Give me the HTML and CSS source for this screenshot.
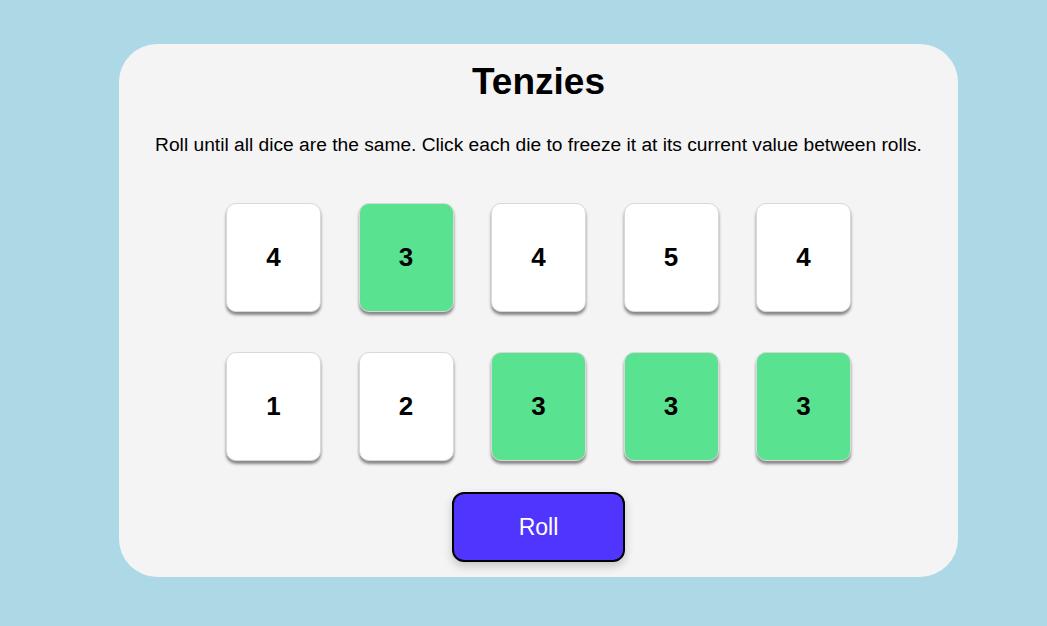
FILE: index.html
```html
<!DOCTYPE html>
<html>
<head>
<meta charset="utf-8">
<link rel="stylesheet" href="styles.css">
</head>
<body>
<main class="card">
  <h1 class="title">Tenzies</h1>
  <p class="instructions">Roll until all dice are the same. Click each die to freeze it at its current value between rolls.</p>
  <div class="dice">
    <button class="die">4</button>
    <button class="die held">3</button>
    <button class="die">4</button>
    <button class="die">5</button>
    <button class="die">4</button>
    <button class="die">1</button>
    <button class="die">2</button>
    <button class="die held">3</button>
    <button class="die held">3</button>
    <button class="die held">3</button>
  </div>
  <button class="roll">Roll</button>
</main>
</body>
</html>
```
FILE: styles.css
```css
html, body {
  margin: 0;
  padding: 0;
}
body {
  background: #ADD8E6;
  font-family: "Liberation Sans", Arial, sans-serif;
  height: 626px;
  overflow: hidden;
}
.card {
  box-sizing: border-box;
  width: 839px;
  height: 533px;
  margin: 44px 0 0 119px;
  background: #F4F4F4;
  border-radius: 38px;
  padding: 19px 0 0;
  display: flex;
  flex-direction: column;
  align-items: center;
}
.title {
  margin: 0;
  font-size: 37px;
  line-height: 37px;
  font-weight: bold;
  color: #000;
}
.instructions {
  margin: 35px 0 0;
  font-size: 19.2px;
  line-height: 19px;
  color: #000;
}
.dice {
  margin-top: 49px;
  display: grid;
  grid-template-columns: repeat(5, 95px);
  grid-auto-rows: 109px;
  column-gap: 37.5px;
  row-gap: 40px;
}
.die {
  box-sizing: border-box;
  background: #FFFFFF;
  border: 1px solid #d8d8d8;
  border-radius: 10px;
  box-shadow: 0 3px 3px rgba(0, 0, 0, 0.45);
  font-family: "Liberation Sans", Arial, sans-serif;
  font-size: 26px;
  font-weight: bold;
  color: #000;
  padding: 0;
}
.die.held {
  background: #59E391;
}
.roll {
  margin-top: 31px;
  box-sizing: border-box;
  width: 173px;
  height: 70px;
  background: #5035FF;
  border: 2px solid #000;
  border-radius: 12px;
  color: #fff;
  font-family: "Liberation Sans", Arial, sans-serif;
  font-size: 23px;
  box-shadow: 0 4px 10px rgba(0, 0, 0, 0.2);
}
```
